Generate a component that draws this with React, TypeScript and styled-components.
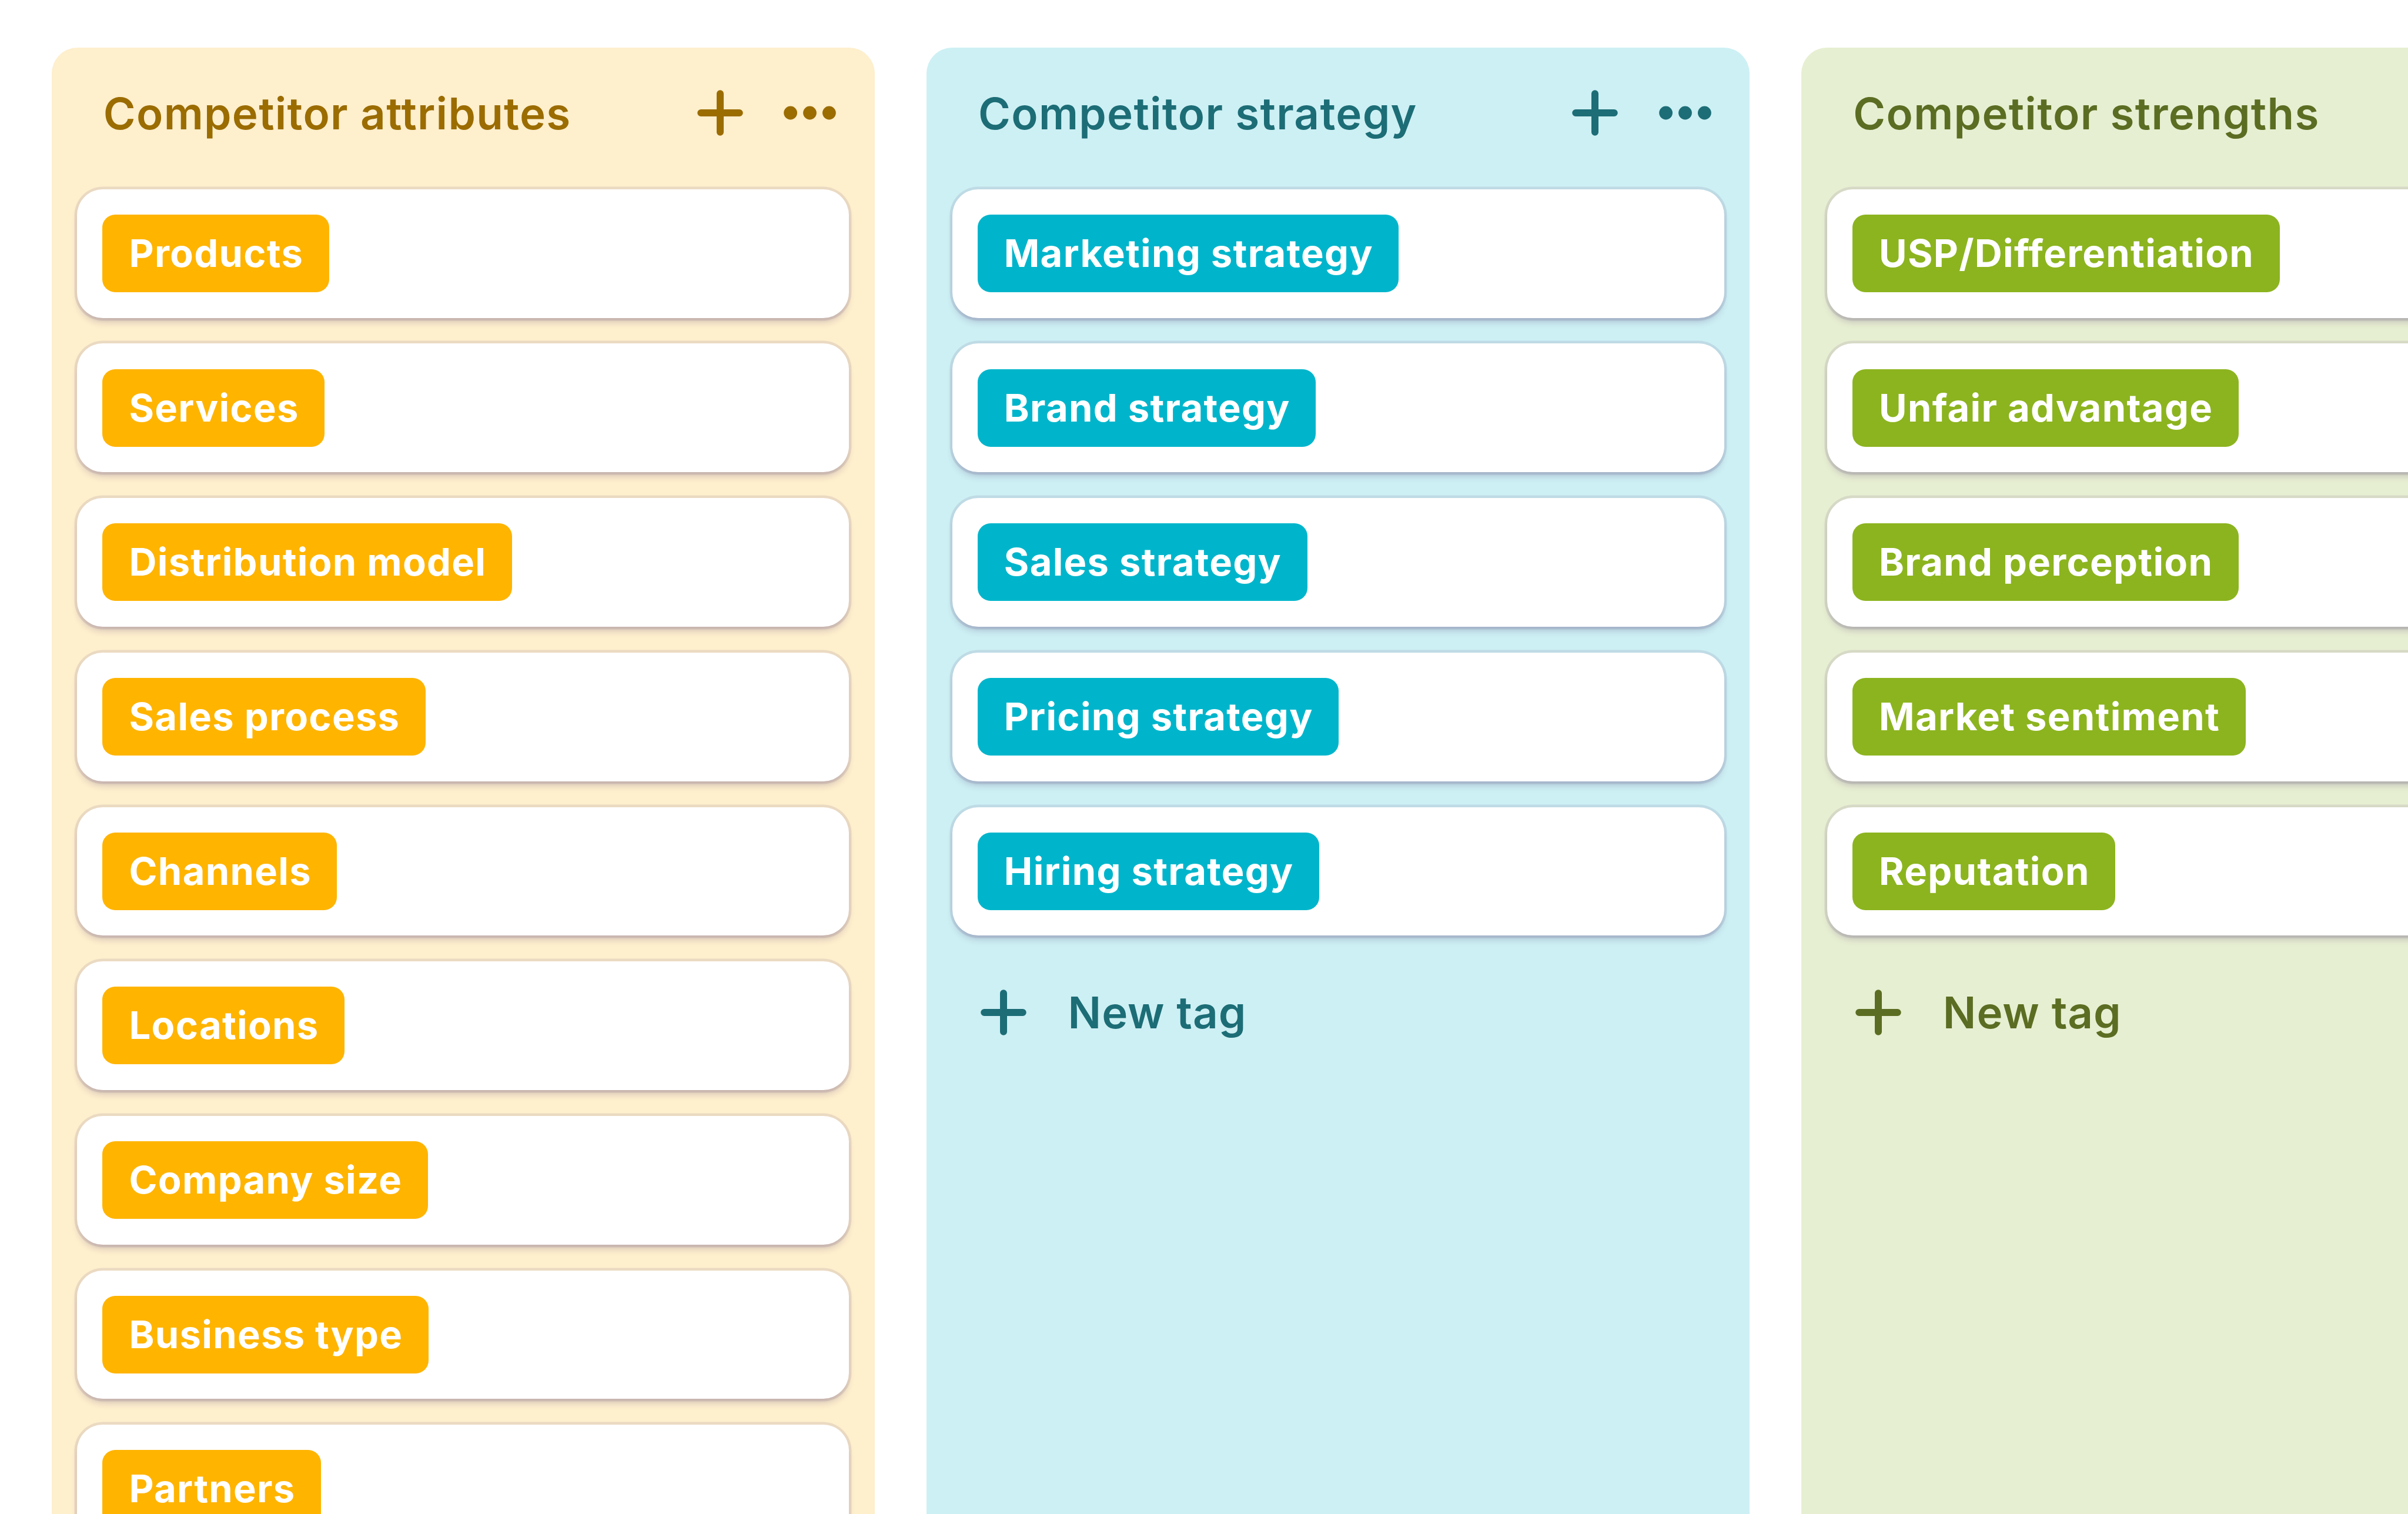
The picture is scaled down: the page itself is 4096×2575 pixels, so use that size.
import styled, { createGlobalStyle } from 'styled-components';

type Palette = {
	background: string;
	text: string;
	chip: string;
};

type ColumnData = {
	title: string;
	palette: Palette;
	tags: string[];
};

const columns: ColumnData[] = [
	{
		title: 'Competitor attributes',
		palette: { background: '#feefcd', text: '#9b6c00', chip: '#ffb400' },
		tags: [
			'Products',
			'Services',
			'Distribution model',
			'Sales process',
			'Channels',
			'Locations',
			'Company size',
			'Business type',
			'Partners',
		],
	},
	{
		title: 'Competitor strategy',
		palette: { background: '#cdf0f4', text: '#1c6d76', chip: '#00b5cb' },
		tags: ['Marketing strategy', 'Brand strategy', 'Sales strategy', 'Pricing strategy', 'Hiring strategy'],
	},
	{
		title: 'Competitor strengths',
		palette: { background: '#e7efd2', text: '#5b6d22', chip: '#8cb41f' },
		tags: ['USP/Differentiation', 'Unfair advantage', 'Brand perception', 'Market sentiment', 'Reputation'],
	},
];

const PlusIcon = () => (
	<Icon viewBox='0 0 80 80'>
		<path d='M40 7.25V72.75M7.25 40H72.75' stroke='currentColor' strokeWidth='12' strokeLinecap='round' />
	</Icon>
);

const DotsIcon = () => (
	<WideIcon viewBox='0 0 89 80'>
		<circle cx='11.6' cy='40' r='11.4' fill='currentColor' />
		<circle cx='44.5' cy='40' r='11.4' fill='currentColor' />
		<circle cx='77.4' cy='40' r='11.4' fill='currentColor' />
	</WideIcon>
);

const Column = ({ title, palette, tags }: ColumnData) => (
	<ColumnPanel $palette={palette}>
		<ColumnHeader>
			<ColumnTitle>{title}</ColumnTitle>
			<HeaderActions>
				<IconButton aria-label='Add'>
					<PlusIcon />
				</IconButton>
				<IconButton aria-label='More'>
					<DotsIcon />
				</IconButton>
			</HeaderActions>
		</ColumnHeader>
		<CardList>
			{tags.map((tag) => (
				<Card key={tag}>
					<Tag $color={palette.chip}>{tag}</Tag>
				</Card>
			))}
		</CardList>
		<NewTagButton>
			<PlusIcon />
			New tag
		</NewTagButton>
	</ColumnPanel>
);

const App = () => (
	<>
		<GlobalStyle />
		<Board>
			{columns.map((column) => (
				<Column key={column.title} {...column} />
			))}
		</Board>
	</>
);

export default App;

// Styled Components
const GlobalStyle = createGlobalStyle`
	* {
		box-sizing: border-box;
	}

	body {
		margin: 0;
		background: white;
		overflow: hidden;
		font-family: Inter, 'Liberation Sans', sans-serif;
	}
`;

const Board = styled.main`
	display: flex;
	gap: 87.7px;
	width: 4096px;
	height: 2575px;
	padding: 80.5px 0 0 87.5px;
	overflow: hidden;
`;

const ColumnPanel = styled.section<{ $palette: Palette }>`
	flex: none;
	width: 1400.6px;
	height: 2800px;
	padding: 0 43.8px;
	border-radius: 44px 44px 0 0;
	background: ${({ $palette }) => $palette.background};
	color: ${({ $palette }) => $palette.text};
`;

const ColumnHeader = styled.header`
	display: flex;
	align-items: center;
	justify-content: space-between;
	height: 241.3px;
	padding: 0 22px 19px 44.5px;
`;

const ColumnTitle = styled.h2`
	margin: 0;
	padding-top: 3px;
	font-size: 74.5px;
	font-weight: 600;
	letter-spacing: 1.3px;
	line-height: 90px;
	white-space: nowrap;
`;

const HeaderActions = styled.div`
	display: flex;
	align-items: center;
	gap: 68.5px;
`;

const IconButton = styled.button`
	display: flex;
	padding: 0;
	border: none;
	background: none;
	color: inherit;
`;

const Icon = styled.svg`
	flex: none;
	display: block;
	width: 80px;
	height: 80px;
	fill: none;
`;

const WideIcon = styled(Icon)`
	width: 89px;
`;

const CardList = styled.div`
	display: flex;
	flex-direction: column;
	gap: 43.9px;
`;

const Card = styled.article`
	display: flex;
	align-items: flex-start;
	height: 218.8px;
	padding: 43.2px 43.2px;
	border-radius: 44px;
	background: white;
	box-shadow:
		0 0 0 4.4px rgba(65, 35, 100, 0.1),
		0 8.8px 13px -4.4px rgba(65, 35, 100, 0.28);
`;

const Tag = styled.span<{ $color: string }>`
	height: 132px;
	padding: 0 43.5px 0 45px;
	border-radius: 22px;
	background: ${({ $color }) => $color};
	color: white;
	font-size: 65px;
	font-weight: 700;
	letter-spacing: 1.3px;
	line-height: 132px;
	white-space: nowrap;
`;

const NewTagButton = styled.button`
	display: flex;
	align-items: center;
	gap: 70px;
	margin-top: 89px;
	padding: 0 0 0 47px;
	border: none;
	background: none;
	color: inherit;
	font-family: inherit;
	font-size: 74.5px;
	font-weight: 600;
	letter-spacing: 1px;
	line-height: 84px;
`;
